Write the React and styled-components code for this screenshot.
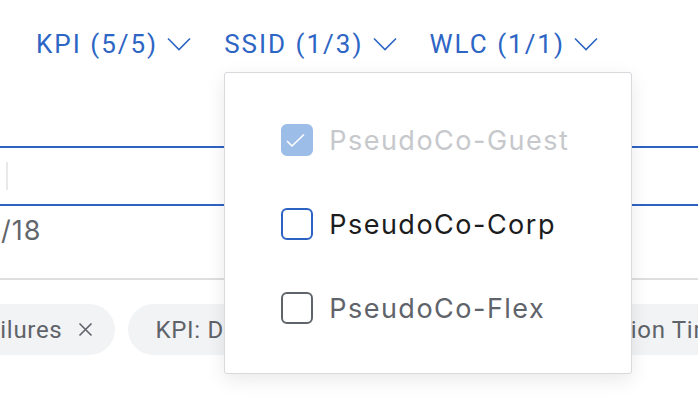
import React from "react";
import styled, { createGlobalStyle } from "styled-components";

const Global = createGlobalStyle`
  html, body { margin: 0; padding: 0; background: #ffffff; }
  body { overflow: hidden; font-family: Roboto, "Noto Sans", sans-serif; }
`;

const Page = styled.div`
  width: 698px;
  height: 402px;
  position: relative;
  overflow: hidden;
  background: #ffffff;
`;

const TabBar = styled.div`
  display: flex;
  align-items: center;
  gap: 33px;
  padding: 26px 0 0 36px;
  height: 36px;
`;

const TabWrap = styled.div`
  position: relative;
`;

const Tab = styled.button`
  display: flex;
  align-items: center;
  gap: 9px;
  border: none;
  background: none;
  padding: 0;
  margin: 0;
  font-family: Roboto, sans-serif;
  font-size: 26px;
  letter-spacing: 2px;
  line-height: 36px;
  color: #2d65c4;
  cursor: pointer;
`;

const Chevron = () => (
  <svg width="24" height="14" viewBox="0 0 24 14" fill="none">
    <path d="M1 1.5 L12 12.5 L23 1.5" stroke="#2d65c4" strokeWidth="1.6" />
  </svg>
);

const Content = styled.div`
  margin-top: 84px;
`;

const SearchField = styled.div`
  height: 56px;
  border-top: 2px solid #2c63c3;
  border-bottom: 2px solid #2c63c3;
  display: flex;
  align-items: center;
`;

const Caret = styled.span`
  display: block;
  width: 2px;
  height: 28px;
  margin-left: 6px;
  background: #e9e9eb;
`;

const Counter = styled.div`
  margin-top: 8px;
  padding-left: 1px;
  font-family: Inter, sans-serif;
  font-size: 27px;
  line-height: 34px;
  letter-spacing: 1px;
  color: #62666c;
`;

const Divider = styled.div`
  margin-top: 30px;
  height: 2px;
  background: #dedee1;
`;

const ChipRow = styled.div`
  display: flex;
  gap: 13px;
  margin-top: 24px;
  margin-left: -54px;
  white-space: nowrap;
`;

const Chip = styled.div`
  flex: none;
  display: flex;
  align-items: center;
  gap: 16px;
  height: 51px;
  padding: 0 22px 0 27px;
  border-radius: 26px;
  background: #f2f3f5;
  color: #5f6369;
  font-family: Roboto, sans-serif;
  font-size: 24px;
  letter-spacing: 0.7px;
`;

const CloseX = () => (
  <svg width="15" height="15" viewBox="0 0 15 15" fill="none">
    <path d="M1.5 1.5 L13.5 13.5 M13.5 1.5 L1.5 13.5" stroke="#5f6369" strokeWidth="1.6" />
  </svg>
);

const Dropdown = styled.div`
  position: absolute;
  top: 46px;
  left: 0;
  box-sizing: border-box;
  width: 408px;
  height: 302px;
  border: 1px solid #d9d9dd;
  border-radius: 3px;
  background: #ffffff;
  box-shadow: 0 6px 20px rgba(0, 0, 0, 0.09);
  padding: 25px 0 0 56px;
  z-index: 10;
`;

const Option = styled.label`
  display: flex;
  align-items: center;
  gap: 16px;
  height: 84px;
  font-family: Inter, sans-serif;
  font-size: 27px;
  letter-spacing: 1.5px;
  color: ${(p) => p.$color};
  white-space: nowrap;
`;

const Box = styled.span`
  box-sizing: border-box;
  width: 32px;
  height: 32px;
  border-radius: 6px;
  border: 2px solid ${(p) => p.$border};
  background: ${(p) => p.$fill || "#ffffff"};
  display: block;
  flex: none;
`;

const Check = () => (
  <svg width="28" height="28" viewBox="0 0 28 28" fill="none" style={{ display: "block" }}>
    <path d="M4 15 L9 20 L21 8.5" stroke="#ffffff" strokeWidth="1.6" />
  </svg>
);

export default function App() {
  return (
    <>
      <Global />
      <Page>
        <TabBar>
          <TabWrap>
            <Tab>
              KPI (5/5)
              <Chevron />
            </Tab>
          </TabWrap>
          <TabWrap>
            <Tab>
              SSID (1/3)
              <Chevron />
            </Tab>
            <Dropdown>
              <Option $color="#c6c8cc">
                <Box $border="#9bbde8" $fill="#9bbde8">
                  <Check />
                </Box>
                PseudoCo-Guest
              </Option>
              <Option $color="#1c1c1e">
                <Box $border="#2c63c3" />
                PseudoCo-Corp
              </Option>
              <Option $color="#5f636a">
                <Box $border="#5f636a" />
                PseudoCo-Flex
              </Option>
            </Dropdown>
          </TabWrap>
          <TabWrap>
            <Tab>
              WLC (1/1)
              <Chevron />
            </Tab>
          </TabWrap>
        </TabBar>
        <Content>
          <SearchField>
            <Caret />
          </SearchField>
          <Counter>/18</Counter>
          <Divider />
          <ChipRow>
            <Chip>
              Failures
              <CloseX />
            </Chip>
            <Chip>
              KPI: DHCP Timeouts
              <CloseX />
            </Chip>
            <Chip>
              KPI: Association Time
              <CloseX />
            </Chip>
          </ChipRow>
        </Content>
      </Page>
    </>
  );
}
